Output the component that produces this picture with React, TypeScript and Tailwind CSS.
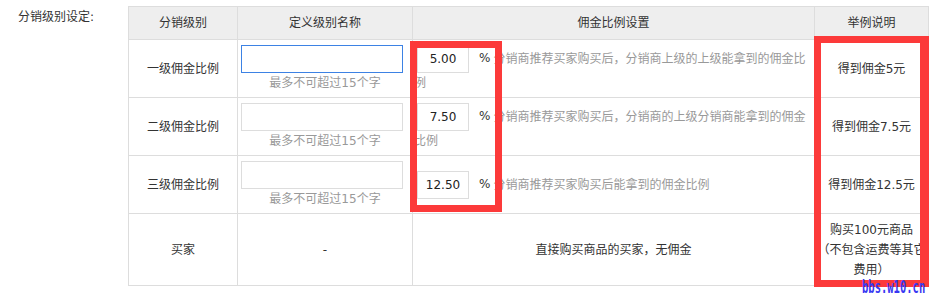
const rows = [
  {
    level: "一级佣金比例",
    rate: "5.00",
    desc: "分销商推荐买家购买后，分销商上级的上级能拿到的佣金比例",
    example: "得到佣金5元",
    focused: true,
  },
  {
    level: "二级佣金比例",
    rate: "7.50",
    desc: "分销商推荐买家购买后，分销商的上级分销商能拿到的佣金比例",
    example: "得到佣金7.5元",
    focused: false,
  },
  {
    level: "三级佣金比例",
    rate: "12.50",
    desc: "分销商推荐买家购买后能拿到的佣金比例",
    example: "得到佣金12.5元",
    focused: false,
  },
];

export default function App() {
  return (
    <div className="relative w-[929px] h-[298px] overflow-hidden bg-white text-[12px] text-[#333] font-['DejaVu_Sans','Noto_Sans_CJK_SC',sans-serif]">
      <div className="flex items-start pt-[6px]">
        {/* label */}
        <div className="w-[128px] shrink-0 pl-[18px] pt-[1px] leading-[20px]">分销级别设定:</div>

        <table className="table-fixed border-collapse w-[801px]">
          <colgroup>
            <col className="w-[109px]" />
            <col className="w-[175px]" />
            <col className="w-[402px]" />
            <col className="w-[114px]" />
          </colgroup>
          <thead>
            <tr className="bg-[#eeeeee]">
              <th className="h-[33px] border border-[#dddddd] font-normal leading-[20px] p-0">分销级别</th>
              <th className="h-[33px] border border-[#dddddd] font-normal leading-[20px] p-0">定义级别名称</th>
              <th className="h-[33px] border border-[#dddddd] font-normal leading-[20px] p-0">佣金比例设置</th>
              <th className="h-[33px] border border-[#dddddd] font-normal leading-[20px] p-0">举例说明</th>
            </tr>
          </thead>
          <tbody>
            {rows.map((row) => (
              <tr key={row.level}>
                <td className="h-[58px] border border-[#dddddd] text-center leading-[20px] p-0">{row.level}</td>
                <td className="h-[58px] border border-[#dddddd] p-0 align-middle">
                  <input
                    readOnly
                    className={
                      row.focused
                        ? "block ml-[3px] w-[162px] h-[28px] border border-[#3d82e4] outline-none bg-white"
                        : "block ml-[3px] w-[162px] h-[28px] border border-[#dddddd] outline-none bg-white"
                    }
                  />
                  <div className="text-center text-[#999] leading-[20px]">最多不可超过15个字</div>
                </td>
                <td className="h-[58px] border border-[#dddddd] px-[1px] py-0 text-left leading-[20px] align-middle">
                  <input
                    readOnly
                    value={row.rate}
                    className="inline-block align-middle ml-[3px] w-[52px] h-[28px] border border-[#dddddd] outline-none text-center text-[#222] bg-white"
                  />
                  <span className="ml-[10px] mr-[3px]">%</span>
                  <span className="text-[#999]">{row.desc}</span>
                </td>
                <td className="h-[58px] border border-[#dddddd] text-center leading-[20px] p-0">{row.example}</td>
              </tr>
            ))}
            <tr>
              <td className="h-[72px] border border-[#dddddd] text-center leading-[20px] p-0">买家</td>
              <td className="h-[72px] border border-[#dddddd] text-center leading-[20px] p-0">-</td>
              <td className="h-[72px] border border-[#dddddd] text-center leading-[20px] p-0">直接购买商品的买家，无佣金</td>
              <td className="h-[72px] border border-[#dddddd] text-center leading-[20px] p-0">
                购买100元商品
                <br />
                （不包含运费等其它
                <br />
                费用）
              </td>
            </tr>
          </tbody>
        </table>
      </div>

      {/* red annotation boxes */}
      <div className="absolute left-[410px] top-[41px] w-[92px] h-[171px] border-[7px] border-[#fc3a3a]" />
      <div className="absolute left-[814px] top-[36px] w-[115px] h-[251px] border-l-[7px] border-t-[7px] border-b-[7px] border-r-[9px] border-[#fc3a3a]" />

      {/* watermark */}
      <div className="absolute left-[862px] top-[278px] leading-[10px] text-[10.5px] font-bold text-[#3838f2] font-['DejaVu_Sans_Mono',monospace] origin-top-left scale-y-[1.7]">
        bbs.w10.cn
      </div>
    </div>
  );
}
